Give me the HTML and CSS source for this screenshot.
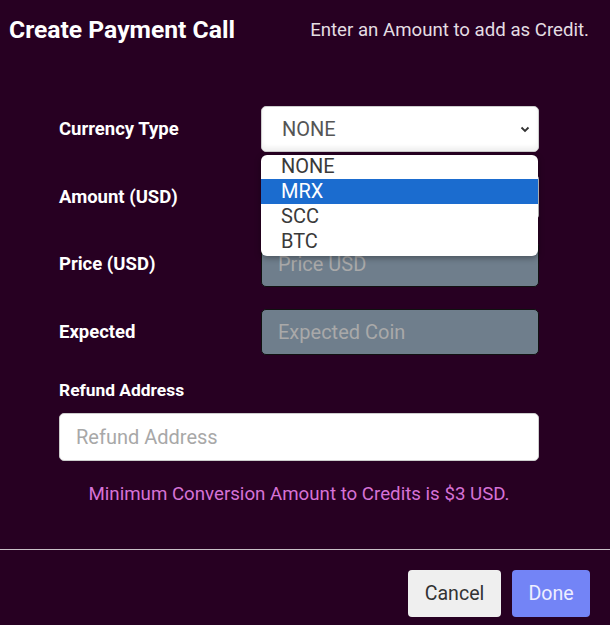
FILE: index.html
```html
<!DOCTYPE html>
<html lang="en">
<head>
  <meta charset="UTF-8">
  <title>Create Payment Call</title>
  <link rel="stylesheet" href="styles.css">
</head>
<body>

  <div class="modal">
    <div class="modal-header">
      <h2>Create Payment Call</h2>
      <span class="hint">Enter an Amount to add as Credit.</span>
    </div>

    <div class="modal-body">
      <div class="row">
        <label>Currency Type</label>
        <div class="select-wrap">
          <div class="select-box">
            <span>NONE</span>
            <svg class="chevron" width="10" height="7" viewBox="0 0 10 7">
              <path d="M1.5 1.5 L5 5 L8.5 1.5" fill="none" stroke="#333" stroke-width="1.8"/>
            </svg>
          </div>
          <ul class="options">
            <li>NONE</li>
            <li class="active">MRX</li>
            <li>SCC</li>
            <li>BTC</li>
          </ul>
        </div>
      </div>

      <div class="row">
        <label>Amount (USD)</label>
        <input type="text" placeholder="Amount USD">
      </div>

      <div class="row">
        <label>Price (USD)</label>
        <input type="text" placeholder="Price USD" disabled>
      </div>

      <div class="row">
        <label>Expected</label>
        <input type="text" placeholder="Expected Coin" disabled>
      </div>

      <label class="block-label">Refund Address</label>
      <input class="wide" type="text" placeholder="Refund Address">

      <p class="note">Minimum Conversion Amount to Credits is $3 USD.</p>
    </div>

    <div class="modal-footer">
      <button class="btn-cancel">Cancel</button>
      <button class="btn-done">Done</button>
    </div>
  </div>

</body>
</html>
```

FILE: styles.css
```css
body {
  margin: 0;
  font-family: Roboto, 'Liberation Sans', sans-serif;
  background-color: #270022;
  color: #fff;
}

.modal {
  width: 610px;
  height: 625px;
  display: flex;
  flex-direction: column;
}

.modal-header {
  display: flex;
  justify-content: space-between;
  align-items: center;
  padding: 16px 21px 0 9px;
}

.modal-header h2 {
  margin: 0;
  font-size: 24.7px;
  font-weight: 700;
  line-height: 28px;
}

.hint {
  font-size: 18.65px;
  color: #e4dde2;
}

.modal-body {
  padding: 0 71px 0 59px;
  margin-top: 62px;
}

.row {
  display: grid;
  grid-template-columns: 202px 1fr;
  align-items: center;
  height: 46px;
  margin-bottom: 21.5px;
}

label {
  font-size: 18.5px;
  font-weight: 700;
  line-height: 22px;
}

input {
  box-sizing: border-box;
  width: 100%;
  height: 46px;
  padding: 0 16px;
  border: 1px solid #ccc;
  border-radius: 5px;
  font-family: inherit;
  font-size: 20px;
  color: #444;
  background: #fff;
}

input::placeholder {
  color: #a8a8a8;
}

input:disabled {
  background: #6f7e8c;
  border-color: #111;
}

input:disabled::placeholder {
  color: #a9a9a9;
}

.select-wrap {
  position: relative;
}

.select-box {
  box-sizing: border-box;
  height: 46px;
  display: flex;
  align-items: center;
  justify-content: space-between;
  padding: 0 8px 0 20px;
  background: #fff;
  border: 1px solid #ccc;
  border-radius: 5px;
  font-size: 20px;
  color: #555;
  box-shadow: inset 0 -4px 4px rgba(0,0,0,0.06);
}

.options {
  position: absolute;
  top: 49px;
  left: 0;
  right: 1px;
  margin: 0;
  padding: 0 0 2px;
  list-style: none;
  background: #fff;
  border-radius: 6px;
  box-shadow: 0 2px 6px rgba(0,0,0,0.35);
  overflow: hidden;
  z-index: 2;
}

.options li {
  height: 25px;
  line-height: 25px;
  padding-left: 20px;
  font-size: 20px;
  color: #3a3a3a;
}

.options li:first-child {
  height: 24px;
  line-height: 22px;
}

.options li.active {
  background: #1b6ccf;
  color: #fff;
}

.block-label {
  display: block;
  margin-top: 24.5px;
  font-size: 17.4px;
}

.wide {
  margin-top: 12px;
  height: 48px;
}

.note {
  text-align: center;
  color: #d672d6;
  font-size: 18.7px;
  margin: 22px 0 0;
  line-height: 22px;
}

.modal-footer {
  margin-top: 44px;
  border-top: 1px solid #c9c0c7;
  display: flex;
  justify-content: flex-end;
  gap: 11px;
  padding: 20px 20px 0;
}

button {
  height: 47px;
  border: none;
  border-radius: 4px;
  font-family: inherit;
  font-size: 19.6px;
  cursor: pointer;
}

.btn-cancel {
  width: 93px;
  background: #efefef;
  color: #333;
}

.btn-done {
  width: 78px;
  background: #7384f6;
  color: #eef;
}
```
